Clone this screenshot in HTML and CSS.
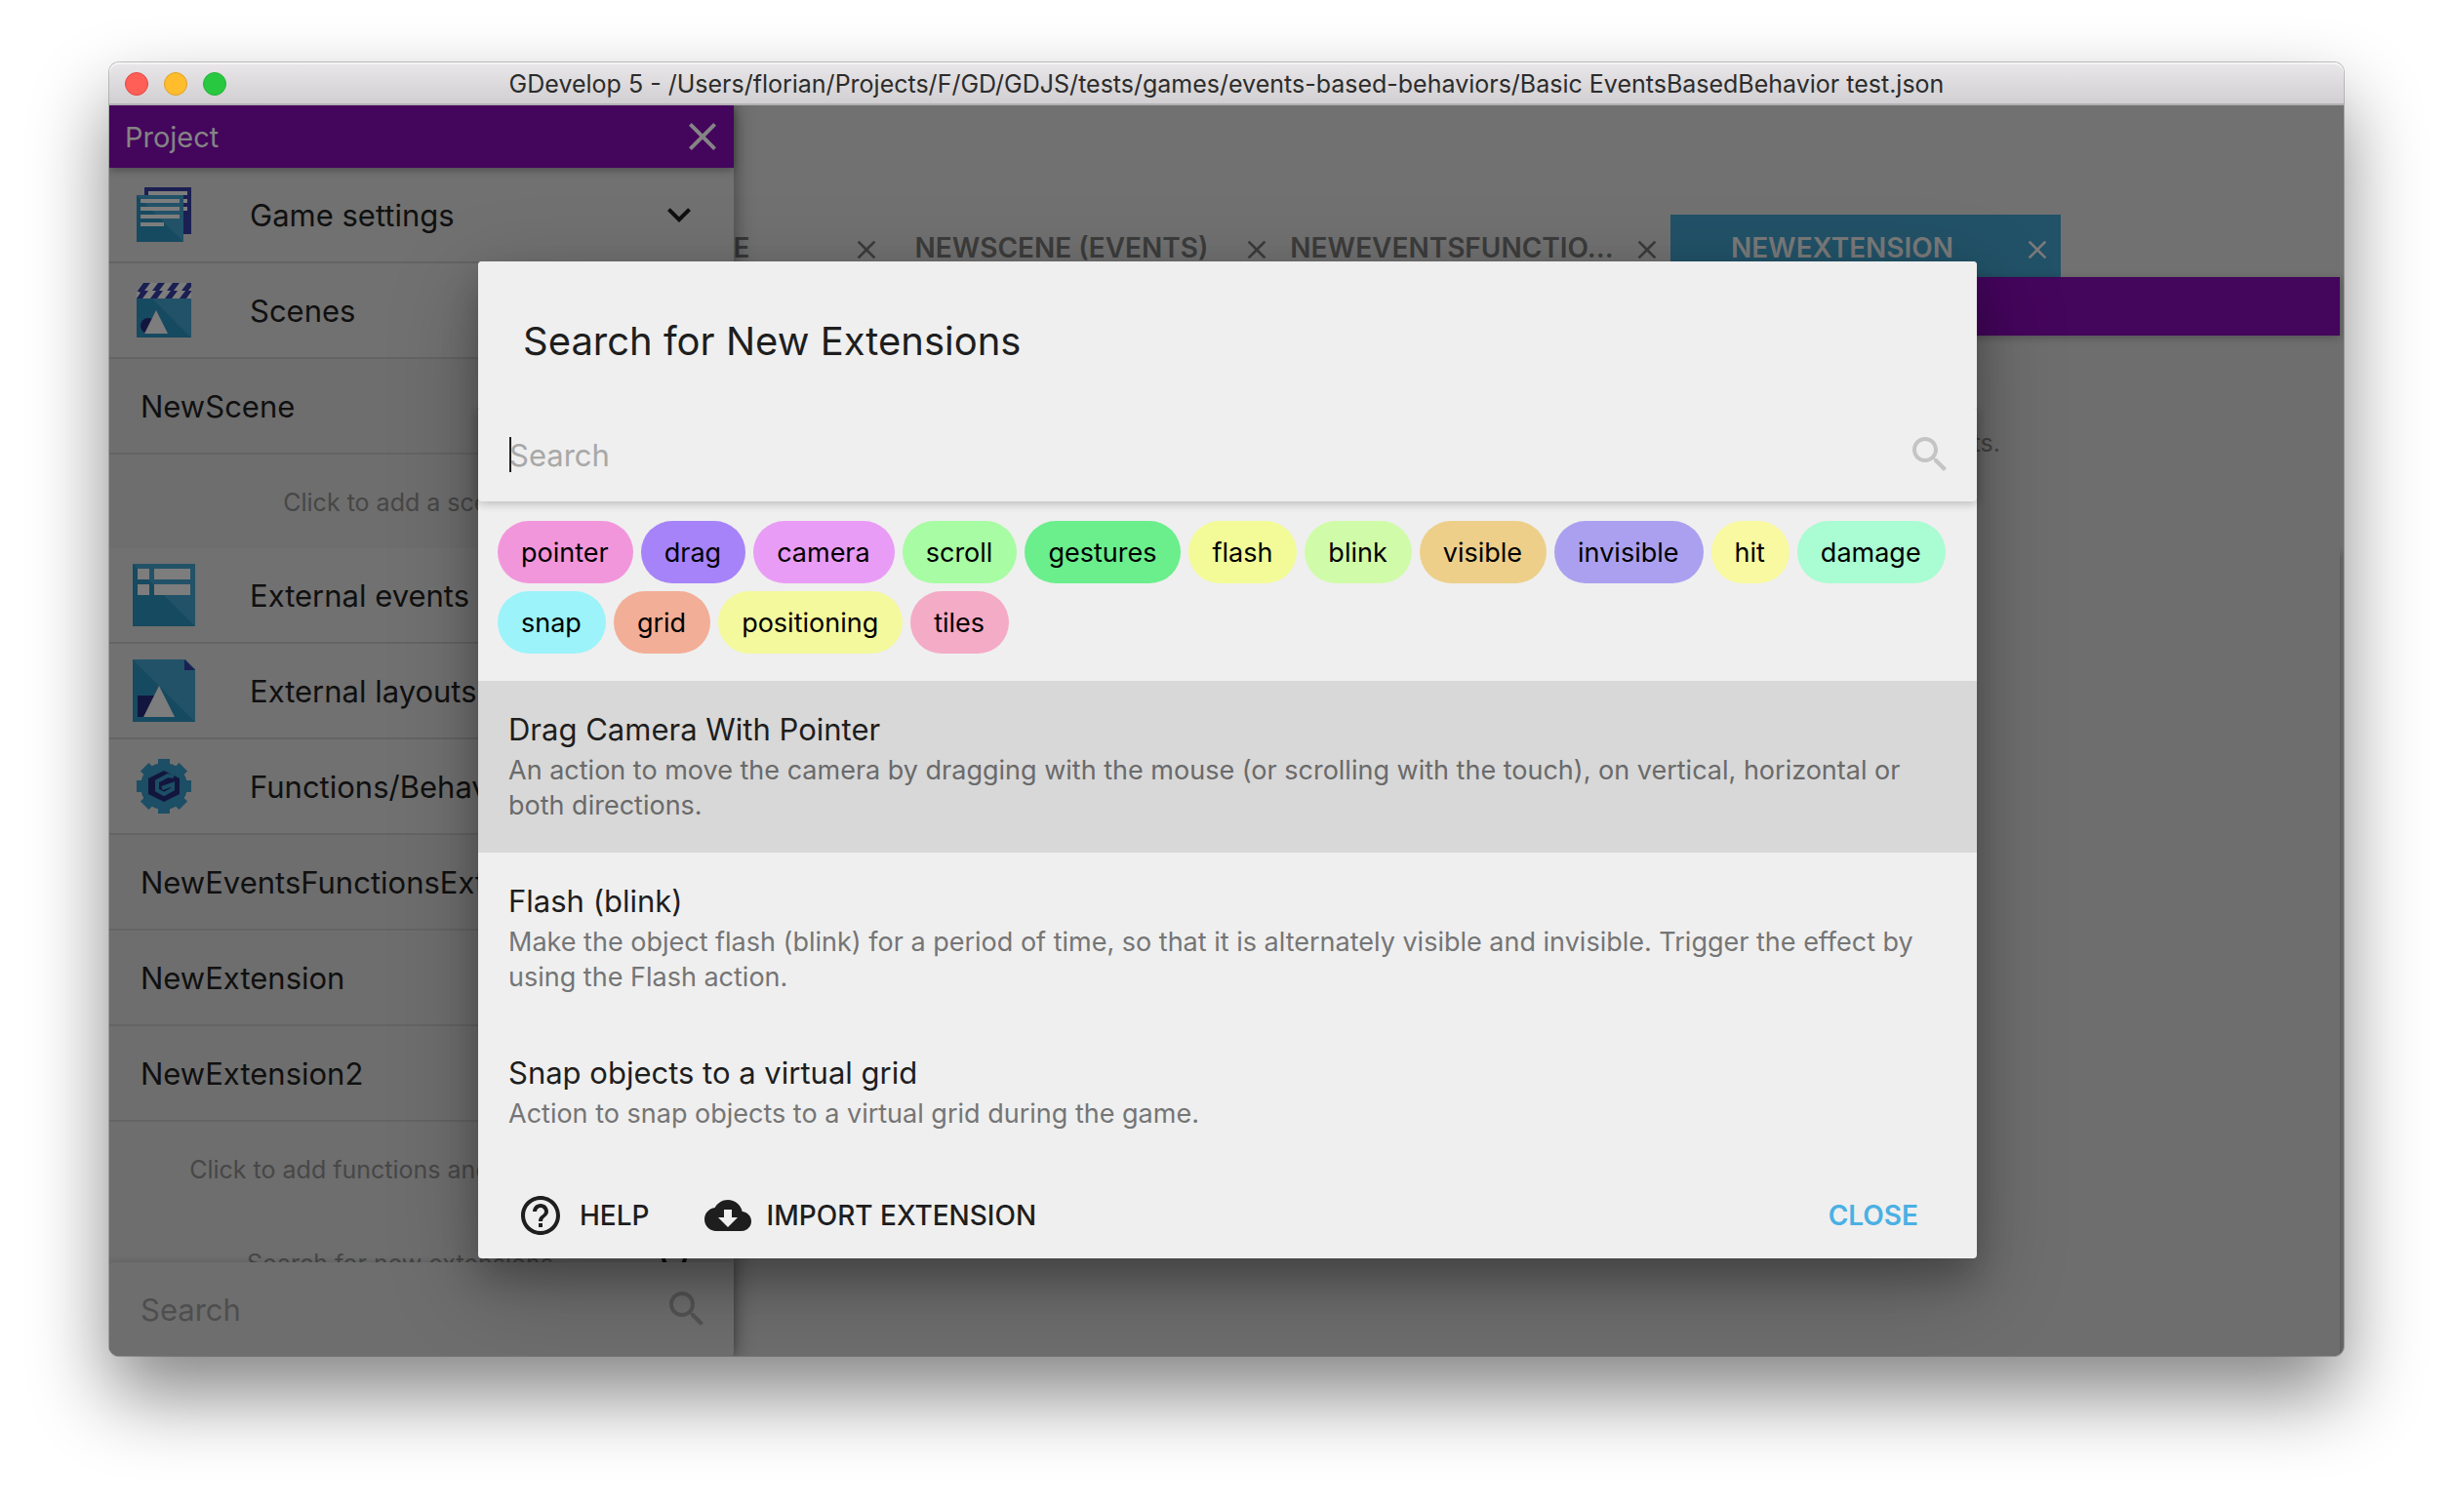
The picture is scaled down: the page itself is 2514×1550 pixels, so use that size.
FILE: index.html
```html
<!DOCTYPE html>
<html lang="en">
<head>
<meta charset="utf-8">
<title>GDevelop 5</title>
<link rel="stylesheet" href="styles.css">
</head>
<body>
<svg class="sprite" aria-hidden="true">
  <symbol id="close" viewBox="0 0 24 24"><path d="M19 6.41L17.59 5 12 10.59 6.41 5 5 6.41 10.59 12 5 17.59 6.41 19 12 13.41 17.59 19 19 17.59 13.41 12z"/></symbol>
  <symbol id="search" viewBox="0 0 24 24"><path d="M15.5 14h-.79l-.28-.27C15.41 12.59 16 11.11 16 9.5 16 5.91 13.09 3 9.5 3S3 5.91 3 9.5 5.91 16 9.5 16c1.61 0 3.09-.59 4.23-1.57l.27.28v.79l5 4.99L20.49 19l-4.99-5zm-6 0C7.01 14 5 11.99 5 9.5S7.01 5 9.5 5 14 7.01 14 9.5 11.99 14 9.5 14z"/></symbol>
</svg>
<div class="window">
  <header class="titlebar">
    <div class="lights"><span class="light red"></span><span class="light yellow"></span><span class="light green"></span></div>
    <div class="window-title">GDevelop 5 - /Users/florian/Projects/F/GD/GDJS/tests/games/events-based-behaviors/Basic EventsBasedBehavior test.json</div>
  </header>
  <div class="workspace">
    <main class="editor">
      <div class="tabs">
        <div class="tab"><button class="tab-label">NEWSCENE</button><button class="tab-close" aria-label="Close tab"><svg><use href="#close"/></svg></button></div>
        <div class="tab"><button class="tab-label">NEWSCENE (EVENTS)</button><button class="tab-close" aria-label="Close tab"><svg><use href="#close"/></svg></button></div>
        <div class="tab"><button class="tab-label">NEWEVENTSFUNCTIO...</button><button class="tab-close" aria-label="Close tab"><svg><use href="#close"/></svg></button></div>
        <div class="tab active"><button class="tab-label">NEWEXTENSION</button><button class="tab-close" aria-label="Close tab"><svg><use href="#close"/></svg></button></div>
      </div>
      <div class="panel">
        <div class="toolbar"></div>
        <p class="empty">ts.</p>
        <div class="sheet"></div>
      </div>
    </main>

    <aside class="drawer">
      <div class="drawer-head"><h2>Project</h2><button class="icon-button" aria-label="Close project"><svg class="icon"><use href="#close"/></svg></button></div>
      <ul class="tree">
        <li class="row">
          <svg class="row-icon" viewBox="0 0 64 64"><path fill="#1b1f52" d="M12 4h48v48H12z"/><path fill="#7d7d7d" d="M16 8h40v4H16zM52 16h4v4h-4zM52 24h4v4h-4z"/><path fill="#225268" d="M4 12h48v48H4z"/><path fill="#164a60" d="M4 12l48 48H4z"/><path fill="#7d7d7d" d="M8 16h40v4H8zM8 24h40v4H8zM8 32h40v4H8zM8 40h24v4H8z"/></svg>
          <span class="row-label">Game settings</span>
          <svg class="icon chevron" viewBox="0 0 24 24"><path d="M16.59 8.59L12 13.17 7.41 8.59 6 10l6 6 6-6z"/></svg>
        </li>
        <li class="row">
          <svg class="row-icon" viewBox="0 0 64 64"><path fill="#7d7d7d" d="M10 4h50v16H4v-8z"/><path fill="#1b1f52" d="M11 4h7l-6 8H5zM26 4h7l-6 8h-7zM41 4h7l-6 8h-7zM56 4h4v4l-3 4h-7zM4 12h12l-6 8H4l4-6zM24 12h7l-6 8h-7zM39 12h7l-6 8h-7zM54 12h6v1l-5 7h-7z"/><path fill="#225268" d="M4 20h56v40H4z"/><path fill="#164a60" d="M4 20h16l40 40H4z"/><circle cx="16" cy="48" r="8" fill="#12163f"/><path fill="#7d7d7d" d="M24 32l12 24H12z"/></svg>
          <span class="row-label">Scenes</span>
        </li>
        <li class="row nested"><span class="row-label">NewScene</span></li>
        <li class="row add"><span class="row-label">Click to add a scene</span></li>
        <li class="row">
          <svg class="row-icon" viewBox="0 0 64 64"><path fill="#225268" d="M0 0h64v64H0z"/><path fill="#164a60" d="M0 0l64 64H0z"/><path fill="#7d7d7d" d="M5 5h12v11H5zM22 5h37v11H22zM5 21h12v11H5zM22 21h37v11H22z"/></svg>
          <span class="row-label">External events</span>
        </li>
        <li class="row">
          <svg class="row-icon" viewBox="0 0 64 64"><path fill="#225268" d="M0 0h54l10 10v54H0z"/><path fill="#164a60" d="M0 0l64 64H0z"/><path fill="#1b1f52" d="M53 0l11 11H53z"/><path fill="#12163f" d="M5 37h18v22H5z"/><path fill="#7d7d7d" d="M27 27l16 32H11z"/></svg>
          <span class="row-label">External layouts</span>
        </li>
        <li class="row">
          <svg class="row-icon" viewBox="0 0 64 64"><g fill="#1c4e65"><circle cx="32" cy="32" r="24"/><path d="M26 4h12v56H26z"/><path d="M4 26h56v12H4z"/><path d="M26 4h12v56H26z" transform="rotate(45 32 32)"/><path d="M26 4h12v56H26z" transform="rotate(-45 32 32)"/></g><path fill="#12163f" d="M32 16l16 8v16l-16 8-16-8V24z"/><path fill="none" stroke="#1c4e65" stroke-width="4" d="M42 22l-6-1-11 6v9l7 4 9-5v-5l-11 4"/></svg>
          <span class="row-label">Functions/Behav</span>
        </li>
        <li class="row nested"><span class="row-label">NewEventsFunctionsExt</span></li>
        <li class="row nested"><span class="row-label">NewExtension</span></li>
        <li class="row nested"><span class="row-label">NewExtension2</span></li>
        <li class="row add"><span class="row-label">Click to add functions and behaviors</span></li>
        <li class="row add find"><span class="row-label">Search for new extensions</span><svg class="icon"><use href="#search"/></svg></li>
      </ul>
      <label class="drawer-search"><input type="text" placeholder="Search" aria-label="Search project"><svg class="icon"><use href="#search"/></svg></label>
    </aside>

    <section class="dialog" role="dialog" aria-labelledby="dialog-title">
      <h1 id="dialog-title">Search for New Extensions</h1>
      <label class="search-paper"><span class="caret"></span><input type="text" placeholder="Search" aria-label="Search extensions"><svg class="icon"><use href="#search"/></svg></label>
      <div class="chips">
        <button class="chip pink">pointer</button>
        <button class="chip violet">drag</button>
        <button class="chip orchid">camera</button>
        <button class="chip lightgreen">scroll</button>
        <button class="chip emerald">gestures</button>
        <button class="chip yellow-lime">flash</button>
        <button class="chip lime">blink</button>
        <button class="chip tan">visible</button>
        <button class="chip lavender">invisible</button>
        <button class="chip lemon">hit</button>
        <button class="chip mint">damage</button>
        <button class="chip cyan">snap</button>
        <button class="chip salmon">grid</button>
        <button class="chip straw">positioning</button>
        <button class="chip rose">tiles</button>
      </div>
      <ul class="results">
        <li class="result selected"><h3>Drag Camera With Pointer</h3><p>An action to move the camera by dragging with the mouse (or scrolling with the touch), on vertical, horizontal or both directions.</p></li>
        <li class="result"><h3>Flash (blink)</h3><p>Make the object flash (blink) for a period of time, so that it is alternately visible and invisible. Trigger the effect by using the Flash action.</p></li>
        <li class="result"><h3>Snap objects to a virtual grid</h3><p>Action to snap objects to a virtual grid during the game.</p></li>
      </ul>
      <footer class="actions">
        <button class="action"><svg class="icon" viewBox="0 0 24 24"><path d="M11 18h2v-2h-2v2zm1-16C6.48 2 2 6.48 2 12s4.480 10 10 10 10-4.480 10-10S17.520 2 12 2zm0 18c-4.410 0-8-3.590-8-8s3.590-8 8-8 8 3.590 8 8-3.590 8-8 8zm0-14c-2.210 0-4 1.790-4 4h2c0-1.100.9-2 2-2s2 .9 2 2c0 2-3 1.750-3 5h2c0-2.250 3-2.500 3-5 0-2.210-1.790-4-4-4z"/></svg>HELP</button>
        <button class="action"><svg class="icon" viewBox="0 0 24 24"><path d="M19.350 10.040C18.670 6.590 15.640 4 12 4 9.110 4 6.600 5.640 5.350 8.040 2.340 8.360 0 10.910 0 14c0 3.310 2.690 6 6 6h13c2.760 0 5-2.240 5-5 0-2.640-2.050-4.780-4.650-4.960zM17 13l-5 5-5-5h3V9h4v4h3z"/></svg>IMPORT EXTENSION</button>
        <button class="action primary">CLOSE</button>
      </footer>
    </section>
  </div>
</div>
</body>
</html>
```
FILE: styles.css
```css
* { box-sizing: border-box; }

body {
  margin: 0;
  min-height: 100vh;
  padding: 64px 112px 160px;
  display: flex;
  background: #fff;
  color: #101010;
  font-family: Inter, "Liberation Sans", sans-serif;
  font-size: 31px;
}

h1, h2, h3, p, ul { margin: 0; padding: 0; font-weight: 400; }
ul { list-style: none; }

button, input {
  border: 0;
  padding: 0;
  background: none;
  color: inherit;
  font: inherit;
}

input { outline: 0; min-width: 0; flex: 1; }

.sprite { position: absolute; width: 0; height: 0; }
.icon { width: 48px; height: 48px; flex: none; fill: currentColor; }

/* Application window */
.window {
  flex: 1;
  min-width: 0;
  display: flex;
  flex-direction: column;
  border-radius: 10px;
  box-shadow: 0 0 0 1px rgba(0, 0, 0, .22), 0 40px 80px rgba(0, 0, 0, .48);
}

.titlebar {
  height: 44px;
  display: grid;
  grid-template-columns: 1fr auto 1fr;
  align-items: center;
  padding: 2px 16px 0;
  border-bottom: 2px solid #b2b0b2;
  border-radius: 10px 10px 0 0;
  background: linear-gradient(#e9e7e9, #d1cfd1);
  box-shadow: inset 0 2px #f5f4f5;
}

.lights { display: flex; gap: 16px; }
.light { width: 24px; height: 24px; border-radius: 50%; border: 1px solid; }
.red { background: #ff5f57; border-color: #e24640; }
.yellow { background: #ffbd2e; border-color: #dfa023; }
.green { background: #28c940; border-color: #24b338; }
.window-title { font-size: 25px; color: #2c2c2c; white-space: nowrap; }

.workspace {
  flex: 1;
  display: grid;
  grid-template: minmax(0, 1fr) / minmax(0, 1fr);
  overflow: hidden;
  border-radius: 0 0 10px 10px;
  background: #717171;
}
.workspace > * { grid-area: 1 / 1; }

/* Editor behind the drawer */
.editor { display: flex; flex-direction: column; padding-top: 112px; }
.tabs { display: flex; padding-left: 400px; }
.tab { width: 400px; height: 64px; display: flex; align-items: center; color: #3c3c3c; }
.tab-label { width: 352px; padding-top: 4px; font-size: 28px; font-weight: 600; text-align: center; white-space: nowrap; }
.tab-close { width: 48px; padding: 8px 8px 0; line-height: 0; }
.tab-close svg { width: 32px; height: 32px; fill: currentColor; }
.active { background: #225268; color: #7a7a7a; }
.panel { flex: 1; display: flex; flex-direction: column; padding-right: 4px; background: #6e6e6e; }
.toolbar { height: 60px; background: #44055c; box-shadow: 0 2px 8px rgba(0, 0, 0, .25); }
.empty { height: 216px; padding: 92px 348px 0 0; font-size: 25px; line-height: 36px; text-align: right; color: #444; }
.sheet { flex: 1; border-radius: 4px; background: #6e6e6e; box-shadow: 2px 6px 6px rgba(0, 0, 0, .2); }

/* Project drawer */
.drawer {
  width: 640px;
  display: flex;
  flex-direction: column;
  background: #6e6e6e;
  box-shadow: 0 0 20px rgba(0, 0, 0, .45);
}
.drawer-head {
  position: relative;
  height: 64px;
  flex: none;
  display: flex;
  align-items: center;
  justify-content: space-between;
  padding: 0 8px 0 16px;
  background: #44055c;
  color: #848484;
  box-shadow: 0 2px 8px rgba(0, 0, 0, .35);
}
.drawer-head h2 { font-size: 29px; }
.icon-button { line-height: 0; }

.tree { flex: 1 1 0; overflow: hidden; }
.row {
  height: 98px;
  display: flex;
  align-items: center;
  padding: 0 32px 0 24px;
  border-bottom: 2px solid #646464;
  background: #717171;
  white-space: nowrap;
}
.row-icon { width: 64px; height: 64px; margin-right: 56px; }
.row-label { padding-top: 1px; }
.chevron { margin-left: auto; }
.nested { padding-left: 32px; background: #6e6e6e; }
.add {
  height: 96px;
  padding: 0 8px 0 0;
  border: 0;
  background: #6e6e6e;
}
.add .row-label { width: 596px; flex: none; text-align: center; font-size: 25px; color: #474747; }
.find .icon { margin-left: -36px; }

.drawer-search {
  height: 96px;
  flex: none;
  display: flex;
  align-items: center;
  padding: 0 24px 0 32px;
  border-radius: 4px;
  background: #6e6e6e;
  box-shadow: 0 0 6px rgba(0, 0, 0, .2);
  color: #545454;
}
.drawer-search input::placeholder { color: #4e4e4e; opacity: 1; }

/* Extension search dialog */
.dialog {
  width: 1536px;
  max-width: 90%;
  margin-top: 160px;
  margin-right: -2px;
  justify-self: center;
  align-self: start;
  border-radius: 4px;
  background: #efefef;
  color: #1e1e1e;
  box-shadow: 0 28px 90px rgba(0, 0, 0, .25), 0 20px 36px rgba(0, 0, 0, .22);
}
.dialog h1 {
  position: relative;
  z-index: 1;
  padding: 50px 46px 36px;
  border-radius: 4px 4px 0 0;
  background: #efefef;
  font-size: 40px;
  line-height: 64px;
}

.search-paper {
  position: relative;
  height: 96px;
  display: flex;
  align-items: center;
  padding: 0 24px 0 32px;
  border-radius: 4px;
  background: #efefef;
  color: #c4c4c4;
  box-shadow: 0 2px 12px rgba(0, 0, 0, .12), 0 2px 8px rgba(0, 0, 0, .12);
}
.search-paper input::placeholder { color: #a8a8a8; opacity: 1; }
.caret { position: absolute; left: 32px; top: 30px; width: 2px; height: 36px; background: #1e1e1e; }

.chips { display: flex; flex-wrap: wrap; gap: 8px; padding: 20px 20px 28px; }
.chip { height: 64px; padding: 0 25px 0 24px; border-radius: 32px; font-size: 27px; color: #000; }
.pink { background: #f296dc; }
.violet { background: #a683f9; }
.orchid { background: #e99cf5; }
.lightgreen { background: #a8fca3; }
.emerald { background: #6bee8c; }
.yellow-lime { background: #f3fb98; }
.lime { background: #d0fca9; }
.tan { background: #edcf89; }
.lavender { background: #aba0ef; }
.lemon { background: #f8f9a0; }
.mint { background: #aafcd2; }
.cyan { background: #9cf3fa; }
.salmon { background: #f3ae97; }
.straw { background: #f4f99d; }
.rose { background: #f4abc6; }

.results { padding-bottom: 20px; }
.result { padding: 32px 32px 30px 31px; }
.selected { background: #d8d8d8; }
.result h3 { font-size: 31px; line-height: 36px; }
.result p { margin-top: 6px; font-size: 27px; line-height: 36px; color: #757575; }
.selected p { color: #6a6a6a; }

.actions { display: flex; gap: 24px; padding: 0 28px 8px 24px; }
.action { height: 72px; display: flex; align-items: center; gap: 16px; padding: 0 16px; font-size: 28px; font-weight: 500; }
.primary { margin-left: auto; padding: 0 32px; font-weight: 600; color: #4ab0e4; }
```
